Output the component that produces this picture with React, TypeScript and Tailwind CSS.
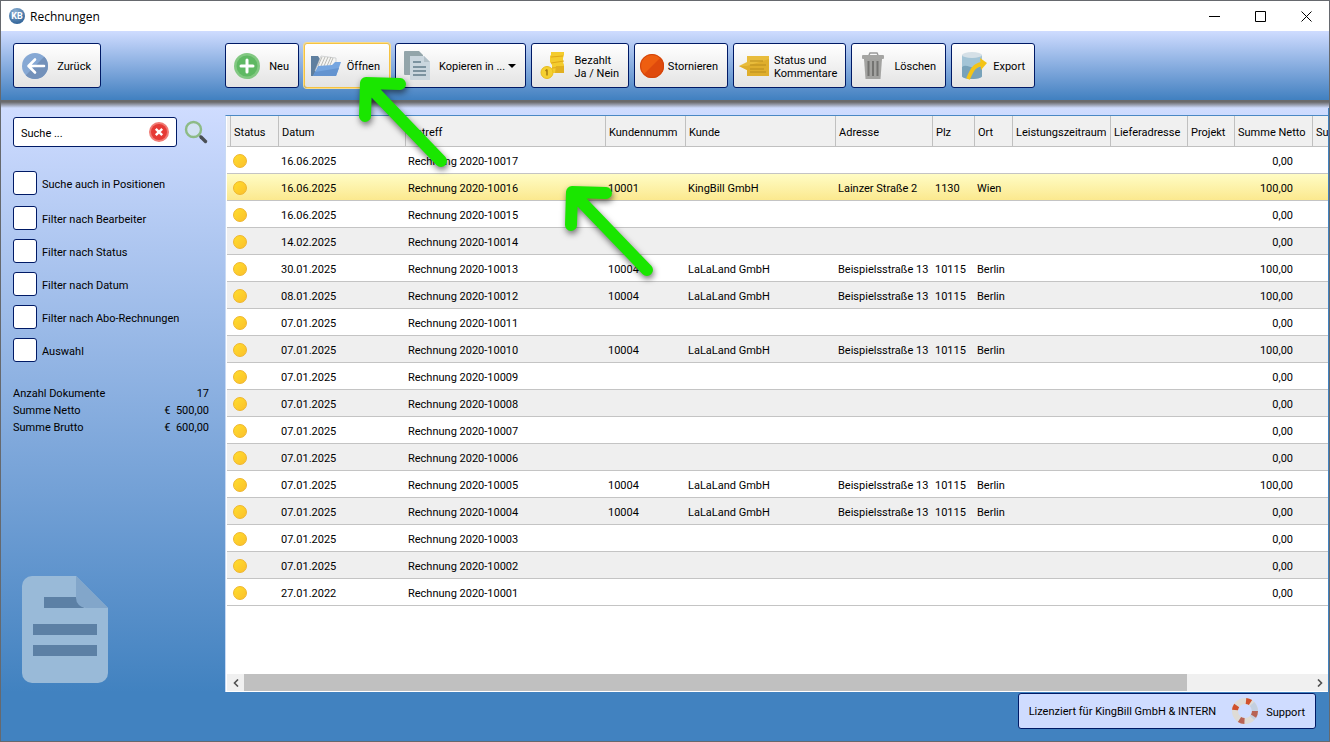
import React from 'react';
import clsx from 'clsx';

interface Invoice {
  date: string;
  number: string;
  customerNo?: string;
  customer?: string;
  address?: string;
  zip?: string;
  city?: string;
  net: string;
}

const berlin = {
  customerNo: '10004',
  customer: 'LaLaLand GmbH',
  address: 'Beispielsstraße 13',
  zip: '10115',
  city: 'Berlin',
  net: '100,00',
};

const invoices: Invoice[] = [
  { date: '16.06.2025', number: '2020-10017', net: '0,00' },
  {
    date: '16.06.2025',
    number: '2020-10016',
    customerNo: '10001',
    customer: 'KingBill GmbH',
    address: 'Lainzer Straße 2',
    zip: '1130',
    city: 'Wien',
    net: '100,00',
  },
  { date: '16.06.2025', number: '2020-10015', net: '0,00' },
  { date: '14.02.2025', number: '2020-10014', net: '0,00' },
  { date: '30.01.2025', number: '2020-10013', ...berlin },
  { date: '08.01.2025', number: '2020-10012', ...berlin },
  { date: '07.01.2025', number: '2020-10011', net: '0,00' },
  { date: '07.01.2025', number: '2020-10010', ...berlin },
  { date: '07.01.2025', number: '2020-10009', net: '0,00' },
  { date: '07.01.2025', number: '2020-10008', net: '0,00' },
  { date: '07.01.2025', number: '2020-10007', net: '0,00' },
  { date: '07.01.2025', number: '2020-10006', net: '0,00' },
  { date: '07.01.2025', number: '2020-10005', ...berlin },
  { date: '07.01.2025', number: '2020-10004', ...berlin, net: '0,00' },
  { date: '07.01.2025', number: '2020-10003', net: '0,00' },
  { date: '07.01.2025', number: '2020-10002', net: '0,00' },
  { date: '27.01.2022', number: '2020-10001', net: '0,00' },
];

const SELECTED = '2020-10016';

const columns = [
  { label: 'Status', width: 'w-[48px]' },
  { label: 'Datum', width: 'w-[127px]' },
  { label: 'Betreff', width: 'w-[200px]' },
  { label: 'Kundennumm', width: 'w-[80px]' },
  { label: 'Kunde', width: 'w-[150px]' },
  { label: 'Adresse', width: 'w-[97px]' },
  { label: 'Plz', width: 'w-[42px]' },
  { label: 'Ort', width: 'w-[38px]' },
  { label: 'Leistungszeitraum', width: 'w-[98px]' },
  { label: 'Lieferadresse', width: 'w-[77px]' },
  { label: 'Projekt', width: 'w-[47px]' },
  { label: 'Summe Netto', width: 'w-[78px]' },
  { label: 'Summe Brutto', width: '' },
];

const filters = [
  'Filter nach Bearbeiter',
  'Filter nach Status',
  'Filter nach Datum',
  'Filter nach Abo-Rechnungen',
  'Auswahl',
];

const totals = [
  ['Anzahl Dokumente', '17'],
  ['Summe Netto', '€  500,00'],
  ['Summe Brutto', '€  600,00'],
];

// Toolbar icons share one 36x32 canvas, narrow ones drop the empty right part
const ToolIcon = ({ narrow, children }: { narrow?: boolean; children: React.ReactNode }) => (
  <svg
    viewBox={narrow ? '0 0 26 32' : '0 0 36 32'}
    className={clsx('h-8 shrink-0', narrow ? 'w-[26px]' : 'w-9')}
    aria-hidden="true"
  >
    {children}
  </svg>
);

const BackIcon = () => (
  <ToolIcon>
    <circle cx="17" cy="16" r="13" fill="#86a8d4" />
    <path d="M7.8 25.2A13 13 0 0 0 26.2 6.8Z" fill="#7391ba" />
    <path d="M26 16H11M17 9.500L10.500 16L17 22.500" fill="none" stroke="#fff" strokeWidth="2.600" strokeLinecap="round" strokeLinejoin="round" />
  </ToolIcon>
);

const PlusIcon = () => (
  <ToolIcon>
    <circle cx="17" cy="16" r="13" fill="#82c882" />
    <circle cx="17" cy="16" r="10.500" fill="#5fb963" />
    <path d="M17 10v12M11 16h12" stroke="#fff" strokeWidth="3" strokeLinecap="round" />
  </ToolIcon>
);

const FolderIcon = () => (
  <ToolIcon>
    <path d="M2 6h7l2 3v17H2Z" fill="#5f7f9f" />
    <path d="M6 21L12 6l15 2v12Z" fill="#f6f6f4" stroke="#b8bcc0" strokeWidth=".6" />
    <path d="M9 16l4-9M12 16l4-9M15 16l4-9M18 16l4-9M21 15l3-7" stroke="#b3b3ae" strokeWidth=".9" />
    <path d="M4 26L9 16l14-1 3-3h6L27 26Z" fill="#76a6e0" />
    <path d="M4 26L6 22l24-4-3 8Z" fill="#6494d0" />
  </ToolIcon>
);

const CopyIcon = () => (
  <ToolIcon>
    <path d="M5 1h14l4 4v20H5a1 1 0 0 1-1-1V2a1 1 0 0 1 1-1Z" fill="#93a5aa" />
    <path d="M10 6h14l6 6v18H11a1 1 0 0 1-1-1Z" fill="#cad6de" />
    <path d="M24 6l6 6h-6Z" fill="#b2c0c8" />
    <path d="M13 12h8M13 17h13M13 21h13M13 25h13" stroke="#7b929f" strokeWidth="2" />
  </ToolIcon>
);

const PaidIcon = () => (
  <ToolIcon>
    <path d="M15 2h13v3l-1 3v4l1 3v8H15v-2l1-2v-4l-2-3V6l1-1Z" fill="#f4cc2e" />
    <path d="M15 7l12-1M15 13l13-2M16 18l12-1" stroke="#dfa818" strokeWidth="1.200" />
    <path d="M20 16h8v7h-9Z" fill="#e2b020" />
    <circle cx="11" cy="22.500" r="6" fill="#f5d030" stroke="#e8bc1c" />
    <path d="M11 19.500v6M9.500 21L11 19.500" fill="none" stroke="#a87c10" strokeWidth="1.500" />
  </ToolIcon>
);

const CancelIcon = () => (
  <ToolIcon narrow>
    <circle cx="13" cy="16" r="12" fill="#ee5e10" />
    <path d="M4.500 24.500A12 12 0 0 0 21.500 7.500Z" fill="#df4a0c" />
    <circle cx="13" cy="16" r="11.500" fill="none" stroke="#d1440d" />
  </ToolIcon>
);

const CommentIcon = () => (
  <ToolIcon>
    <path d="M9 6h22v20H9v-6L1 16l8-4Z" fill="#e8bc3c" />
    <path d="M9 20l-8-4h8l22-7v17H9Z" fill="#dfae2c" />
    <path d="M12 11h13M12 15h16M12 19h14M12 22h16" stroke="#b88c1c" />
  </ToolIcon>
);

const TrashIcon = () => (
  <ToolIcon>
    <path d="M13 5l1-2h7l1 2" fill="none" stroke="#999" strokeWidth="1.500" />
    <rect x="6" y="5" width="22" height="4" rx="1" fill="#a5a5a3" />
    <path d="M8 9h18l-1.500 20h-15Z" fill="#a3a3a1" />
    <path d="M12.500 11v15M17 11v15M21.500 11v15" stroke="#737371" strokeWidth="2" />
  </ToolIcon>
);

const ExportIcon = () => (
  <ToolIcon>
    <path d="M6 5v21c0 4 20 4 20 0V5Z" fill="#a3c4d6" />
    <path d="M6 17c5-4 10 4 20-1v10c0 4-20 4-20 0Z" fill="#78a2b9" />
    <ellipse cx="16" cy="5" rx="10" ry="3" fill="#d5e0e7" />
    <path d="M12 29c4-9 6-14 14-15" fill="none" stroke="#f4c416" strokeWidth="4" />
    <path d="M24 8l7 5-6 7Z" fill="#f4c416" />
  </ToolIcon>
);

interface ToolButtonProps {
  icon: React.ReactNode;
  width: string;
  active?: boolean;
  menu?: boolean;
  children: React.ReactNode;
}

const ToolButton = ({ icon, width, active, menu, children }: ToolButtonProps) => (
  <button
    type="button"
    className={clsx(
      'flex h-[45px] shrink-0 items-center justify-between rounded-[3px] border bg-linear-to-b from-white to-[#e3e3e3] pr-[9px] pl-1 text-left leading-[13px]',
      width,
      active ? 'border-[#f5c342] ring-1 ring-[#f8dc8c]' : 'border-[#001a66]'
    )}
  >
    {icon}
    <span className="pt-0.5 whitespace-nowrap">{children}</span>
    {menu && (
      <svg viewBox="0 0 8 4" className="h-1 w-2" aria-hidden="true">
        <path d="M0 0h8L4 4Z" fill="#000" />
      </svg>
    )}
  </button>
);

const TitleBar = () => (
  <header className="flex h-[30px] shrink-0 items-center bg-white pl-2">
    <svg viewBox="0 0 16 16" className="size-4" aria-hidden="true">
      <defs>
        <radialGradient id="logo" cx=".4" cy=".25" r=".8">
          <stop offset="0" stopColor="#8fb2d4" />
          <stop offset="1" stopColor="#2b5f95" />
        </radialGradient>
      </defs>
      <circle cx="8" cy="8" r="8" fill="url(#logo)" />
      <text x="8" y="11" textAnchor="middle" fontSize="9" fontWeight="700" fill="#fff">
        KB
      </text>
    </svg>
    <h1 className="ml-[5px] font-['Open_Sans',sans-serif] text-[12px]">Rechnungen</h1>
    <div className="ml-auto flex h-full">
      {[
        { label: 'Minimieren', d: 'M0 5.500h11' },
        { label: 'Maximieren', d: 'M.5 .5h10v10h-10Z' },
        { label: 'Schließen', d: 'M.5 .5l10 10M10.500 .5l-10 10' },
      ].map((c) => (
        <button key={c.label} type="button" aria-label={c.label} className="flex w-[46px] items-center justify-center">
          <svg viewBox="0 0 11 11" className="size-[11px]" fill="none" stroke="#000">
            <path d={c.d} />
          </svg>
        </button>
      ))}
    </div>
  </header>
);

const Toolbar = () => (
  <nav className="flex h-[69px] shrink-0 items-center bg-linear-to-b from-[#cfdcff] to-[#4080c0] pl-3">
    <div className="w-[212px] shrink-0">
      <ToolButton icon={<BackIcon />} width="w-[88px]">Zurück</ToolButton>
    </div>
    <div className="flex gap-[5px]">
      <ToolButton icon={<PlusIcon />} width="w-[74px]">Neu</ToolButton>
      <ToolButton icon={<FolderIcon />} width="w-[86px]" active>Öffnen</ToolButton>
      <ToolButton icon={<CopyIcon />} width="w-[131px]" menu>Kopieren in ...</ToolButton>
      <ToolButton icon={<PaidIcon />} width="w-[98px]">Bezahlt<br />Ja / Nein</ToolButton>
      <ToolButton icon={<CancelIcon />} width="w-[94px]">Stornieren</ToolButton>
      <ToolButton icon={<CommentIcon />} width="w-[113px]">Status und<br />Kommentare</ToolButton>
      <ToolButton icon={<TrashIcon />} width="w-[95px]">Löschen</ToolButton>
      <ToolButton icon={<ExportIcon />} width="w-[84px]">Export</ToolButton>
    </div>
  </nav>
);

const Filter = ({ label }: { label: string }) => (
  <label className="flex items-center gap-[5px]">
    <input
      type="checkbox"
      className="size-6 appearance-none rounded-[3px] border border-[#001a66] bg-white checked:bg-[#4080c0]"
    />
    <span className="pt-0.5">{label}</span>
  </label>
);

const Sidebar = () => (
  <aside className="flex w-[224px] shrink-0 flex-col pt-[9px] pl-3">
    <div className="flex items-center">
      <div className="flex h-[30px] w-[164px] items-center rounded-[3px] border border-[#001a66] bg-white px-[7px]">
        <input
          aria-label="Suche"
          placeholder="Suche ..."
          className="min-w-0 flex-1 bg-transparent pt-0.5 outline-none placeholder:text-black"
        />
        <button type="button" aria-label="Suche löschen">
          <svg viewBox="0 0 20 20" className="size-5">
            <circle cx="10" cy="10" r="10" fill="#f07a74" />
            <circle cx="10" cy="10" r="8" fill="#e63a35" />
            <path d="M6.800 6.800l6.400 6.400M13.200 6.800l-6.400 6.400" stroke="#fff" strokeWidth="2.400" />
          </svg>
        </button>
      </div>
      <button type="button" aria-label="Suchen" className="ml-[7px]">
        <svg viewBox="0 0 24 24" className="size-6">
          <path d="M15 15l3 3" stroke="#8a9a80" strokeWidth="2" />
          <circle cx="9.500" cy="9.500" r="7.500" fill="#d3e2f4" stroke="#8dbb86" strokeWidth="2.400" />
          <path d="M17 17l4.500 4.500" stroke="#4a4f55" strokeWidth="3.400" strokeLinecap="round" />
        </svg>
      </button>
    </div>

    <div className="mt-6 mb-[11px]">
      <Filter label="Suche auch in Positionen" />
    </div>
    <div className="flex flex-col gap-[9px]">
      {filters.map((f) => (
        <Filter key={f} label={f} />
      ))}
    </div>

    <dl className="mt-[23px] mr-4 leading-[17px]">
      {totals.map(([label, value]) => (
        <div key={label} className="flex justify-between">
          <dt>{label}</dt>
          <dd className="whitespace-pre">{value}</dd>
        </div>
      ))}
    </dl>

    <svg viewBox="0 0 86 107" className="mt-auto mb-[9px] ml-[9px] h-[107px] w-[86px]" aria-hidden="true">
      <path d="M10 0h44l32 32v65a10 10 0 0 1-10 10H10A10 10 0 0 1 0 97V10A10 10 0 0 1 10 0Z" fill="#99bad8" />
      <path d="M22 21h34l6 11H22ZM11 48h64v11H11ZM11 69h64v11H11Z" fill="#5c80a5" />
      <path d="M54 0l32 32H64a10 10 0 0 1-10-10Z" fill="#82a6ca" />
    </svg>
  </aside>
);

const InvoiceTable = () => (
  <table className="w-[1251px] min-w-full table-fixed border-separate border-spacing-0 text-left">
    <colgroup>
      <col className="w-[4px]" />
      {columns.map((c) => (
        <col key={c.label} className={c.width} />
      ))}
    </colgroup>
    <thead>
      <tr className="h-[31px] bg-[#f0f0f0]">
        <td className="border-r border-b border-[#c0c0c0]" />
        {columns.map((c) => (
          <th key={c.label} className="overflow-hidden border-r border-b border-[#c0c0c0] p-0 pt-0.5 pl-[3px] font-normal whitespace-nowrap">
            {c.label}
          </th>
        ))}
      </tr>
    </thead>
    <tbody>
      {invoices.map((inv, i) => (
        <tr
          key={inv.number}
          className={clsx(
            'h-[27px] whitespace-nowrap [&>td]:border-b [&>td]:border-[#c4c4c4] [&>td]:p-0 [&>td]:pt-0.5 [&>td]:pl-[2px]',
            inv.number === SELECTED
              ? 'bg-linear-to-b from-[#fffcc4] to-[#fbe88c]'
              : i % 2
                ? 'bg-[#efefef]'
                : 'bg-white'
          )}
        >
          <td />
          <td>
            <div className="size-[14px] rounded-full border border-[#efb52c] bg-linear-to-br from-[#ffdd2c] to-[#fbc02c]" />
          </td>
          <td>{inv.date}</td>
          <td>Rechnung {inv.number}</td>
          <td>{inv.customerNo}</td>
          <td>{inv.customer}</td>
          <td>{inv.address}</td>
          <td>{inv.zip}</td>
          <td>{inv.city}</td>
          <td />
          <td />
          <td />
          <td>
            <div className="pr-5 text-right">{inv.net}</div>
          </td>
          <td />
        </tr>
      ))}
    </tbody>
  </table>
);

const ScrollBar = () => (
  <div className="flex h-[17px] shrink-0 bg-[#f0f0f0]">
    <button type="button" aria-label="Nach links" className="flex w-[17px] items-center justify-center">
      <svg viewBox="0 0 6 8" className="h-2 w-1.5" fill="none" stroke="#505050" strokeWidth="1.600">
        <path d="M5 .5L1.500 4L5 7.500" />
      </svg>
    </button>
    <div className="flex-1">
      <div className="h-full w-[88.4%] bg-[#c0c0c0]" />
    </div>
    <button type="button" aria-label="Nach rechts" className="flex w-[17px] items-center justify-center">
      <svg viewBox="0 0 6 8" className="h-2 w-1.5" fill="none" stroke="#505050" strokeWidth="1.600">
        <path d="M1 .5L4.500 4L1 7.500" />
      </svg>
    </button>
  </div>
);

const StatusBar = () => (
  <footer className="flex h-[49px] shrink-0 items-start justify-end bg-[#4182c0] pr-3">
    <div className="mt-px flex h-9 items-center rounded-[3px] border border-[#001a66] bg-[#cfdcff] px-2.5">
      <span>Lizenziert für KingBill GmbH &amp; INTERN</span>
      <button type="button" className="ml-4 flex items-center gap-2">
        <svg viewBox="0 0 26 26" className="size-[26px]" fill="none" strokeWidth="6" aria-hidden="true">
          <circle cx="13" cy="13" r="10" stroke="#dedbd6" />
          <path d="M20 6A10 10 0 0 1 20 20" stroke="#c3cfdf" />
          <path d="M14 3A10 10 0 0 1 18.500 4.600M3 12A10 10 0 0 1 4.700 7.500" stroke="#d1512c" />
          <path d="M23 13A10 10 0 0 1 21.500 18.200M12.500 23A10 10 0 0 1 7.500 21.400" stroke="#b86355" />
        </svg>
        <span className="pt-0.5">Support</span>
      </button>
    </div>
  </footer>
);

const Pointer = ({ className }: { className: string }) => (
  <svg
    viewBox="0 0 100 100"
    className={clsx('pointer-events-none absolute size-[100px] drop-shadow-[1px_3px_3px_rgba(0,0,0,0.55)]', className)}
    fill="none"
    stroke="#1ae600"
    strokeWidth="12"
    strokeLinecap="round"
    strokeLinejoin="round"
    aria-hidden="true"
  >
    <path d="M50 14L16 13L15 46M16 13L91 91" />
  </svg>
);

export default function App() {
  return (
    <div className="relative flex h-screen min-h-[700px] flex-col overflow-hidden border border-[#66696e] font-[Roboto,sans-serif] text-[11px] leading-[13px] text-black">
      <TitleBar />
      <Toolbar />
      <div className="h-2 shrink-0 bg-linear-to-b from-[#6a6a6c] from-25% to-[#cfdcff]" />
      <main className="flex min-h-0 flex-1 flex-col bg-[#4182c0] pr-px">
        <div className="flex min-h-0 flex-1 bg-linear-to-b from-[#cfdcff] to-[#4182c0]">
          <Sidebar />
          <section className="mt-[7px] flex min-w-0 flex-1 flex-col border-t border-l border-t-[#4a88c4] border-l-[#c8daf4] bg-white pl-px">
            <div className="min-h-0 flex-1 overflow-hidden">
              <InvoiceTable />
            </div>
            <ScrollBar />
            <div className="h-px shrink-0 bg-white" />
          </section>
        </div>
        <StatusBar />
      </main>
      <Pointer className="top-[69px] left-[349px]" />
      <Pointer className="top-[178px] left-[555px]" />
    </div>
  );
}
